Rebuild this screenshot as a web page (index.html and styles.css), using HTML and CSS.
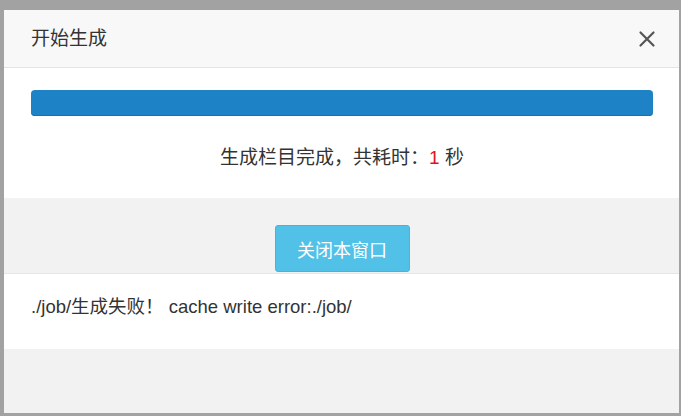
FILE: index.html
```html
<!DOCTYPE html>
<html lang="zh-CN">
<head>
<meta charset="utf-8">
<title>开始生成</title>
<link rel="stylesheet" href="styles.css">
</head>
<body>
<div class="frame">
  <div class="modal">
    <div class="modal-header">
      <span class="modal-title">开始生成</span>
      <svg class="close" width="18" height="18" viewBox="0 0 18 18" aria-label="关闭">
        <path d="M2.5 2.5 L15.5 15.5 M15.5 2.5 L2.5 15.5" stroke="#555" stroke-width="2.2" stroke-linecap="round" fill="none"/>
      </svg>
    </div>
    <div class="progress-section">
      <div class="progress"><div class="progress-bar"></div></div>
      <p class="status">生成栏目完成，共耗时：<span class="num">1</span> 秒</p>
    </div>
    <div class="action-section">
      <button class="btn-close" type="button">关闭本窗口</button>
    </div>
    <div class="log-section">
      <p class="log">./job/生成失败！ cache write error:./job/</p>
    </div>
    <div class="filler"></div>
  </div>
</div>
</body>
</html>
```
FILE: styles.css
```css
html, body {
  margin: 0;
  padding: 0;
  height: 100%;
  background: #a2a2a2;
  font-family: "Liberation Sans", "Noto Sans CJK SC", Arial, sans-serif;
  color: #333;
}

.frame {
  height: 100%;
  box-sizing: border-box;
  padding: 10px 2px 3px 4px;
  display: flex;
}

.modal {
  flex: 1;
  display: flex;
  flex-direction: column;
  background: #f2f2f2;
}

.modal-header {
  height: 57px;
  border-bottom: 1px solid #e3e3e3;
  background: #f8f8f8;
  display: flex;
  align-items: center;
  justify-content: space-between;
  padding: 0 23px 0 27px;
}

.modal-title {
  font-size: 19px;
  line-height: 24px;
  color: #333;
}

.close {
  display: block;
}

.progress-section {
  background: #fff;
  padding: 22px 26px 28px 27px;
}

.progress {
  height: 26px;
  border-radius: 4px;
  background: #1d82c6;
  box-shadow: inset 0 -1px 0 #1a70ab;
  overflow: hidden;
}

.progress-bar {
  width: 100%;
  height: 100%;
}

.status {
  margin: 30px 0 0;
  text-align: center;
  font-size: 19px;
  line-height: 24px;
  color: #333;
}

.num {
  color: #e0141e;
}

.action-section {
  background: #f2f2f2;
  padding: 27px 0 1px;
  border-bottom: 1px solid #e6e6e6;
  display: flex;
  justify-content: center;
}

.btn-close {
  width: 135px;
  height: 47px;
  border: 1px solid #46b5dc;
  border-radius: 3px;
  background: #51c1e8;
  color: #fff;
  font-family: "Liberation Sans", "Noto Sans CJK SC", sans-serif;
  font-size: 18px;
  padding: 0;
  margin-left: 1px;
}

.log-section {
  background: #fff;
  padding: 21px 27px 30px;
}

.log {
  margin: 0;
  font-size: 18.5px;
  line-height: 24px;
  color: #333;
}

.filler {
  flex: 1;
  background: #f2f2f2;
}
```
